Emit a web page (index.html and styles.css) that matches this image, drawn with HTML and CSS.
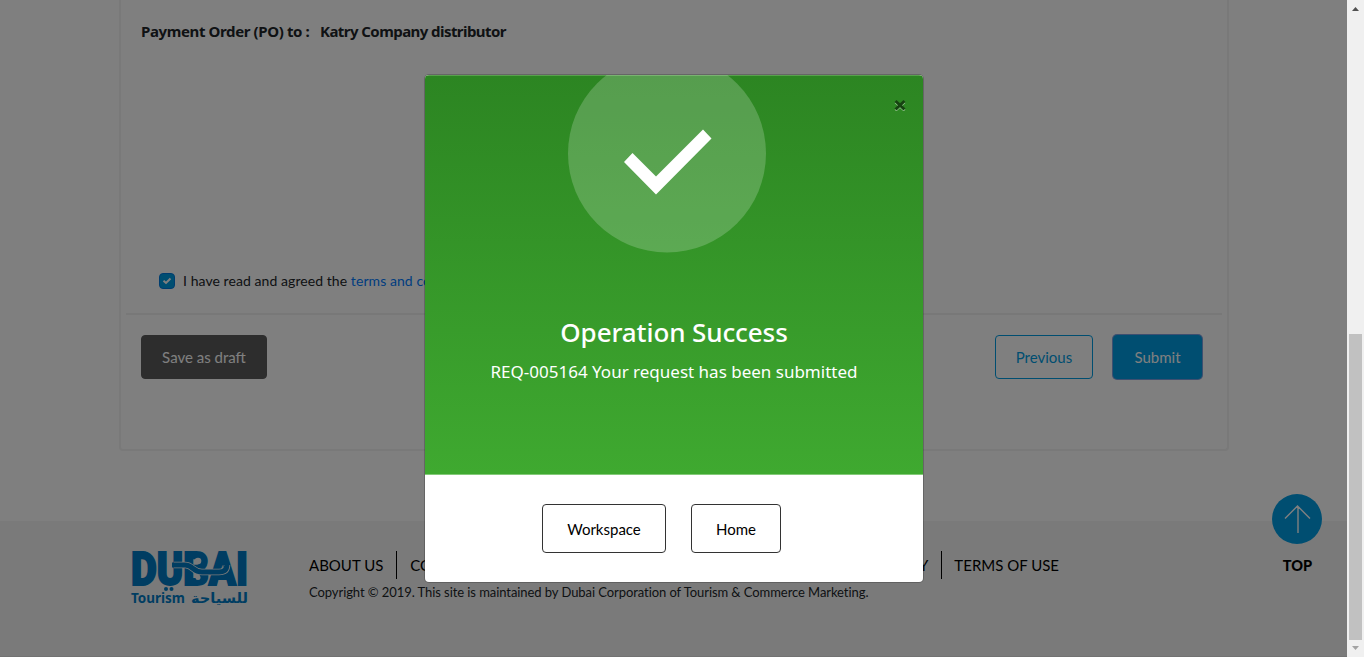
FILE: index.html
```html
<!DOCTYPE html>
<html lang="en">
<head>
<meta charset="utf-8">
<title>Operation Success</title>
<link rel="stylesheet" href="styles.css">
</head>
<body>
<div class="page">
  <main class="panel">
    <h2 class="po"><span class="po-label">Payment Order (PO) to :</span><span class="po-value">Katry Company distributor</span></h2>
    <div class="agree">
      <span class="checkbox"><svg width="10" height="8" viewBox="0 0 10 8"><path d="M1.500 3.800 4 6 8.500 1.500" fill="none" stroke="#fff" stroke-width="2"/></svg></span>
      <span class="agree-text">I have read and agreed the <a class="link">terms and conditions</a></span>
    </div>
    <div class="actions">
      <button class="btn btn-draft"><span>Save as draft</span></button>
      <button class="btn btn-prev"><span>Previous</span></button>
      <button class="btn btn-submit"><span>Submit</span></button>
    </div>
  </main>
  <footer class="footer">
    <svg class="logo" width="120" height="60" viewBox="0 0 120 60">
      <g fill="#007bc4">
        <text class="logo-main" x="1" y="34.500" textLength="117" lengthAdjust="spacingAndGlyphs">DUBAI</text>
        <circle cx="36" cy="39" r="2"/><circle cx="41.500" cy="39" r="2"/>
        <text class="logo-sub" x="1" y="53" textLength="54" lengthAdjust="spacingAndGlyphs">Tourism</text>
        <text class="logo-ar" x="118" y="53" direction="rtl" textLength="57" lengthAdjust="spacingAndGlyphs">للسياحة</text>
      </g>
      <path d="M44 15h11q4 0 8 3.500t9 3.500h17q8 0 8-7" fill="none" stroke="#f5f5f5" stroke-width="6.500"/>
      <path d="M42 15h13q4 0 8 3.500t9 3.500h17q8 0 8-8" fill="none" stroke="#007bc4" stroke-width="5"/>
      <circle cx="68" cy="11" r="3.300" fill="#f5f5f5"/><circle cx="68" cy="27.500" r="2.500" fill="#f5f5f5"/>
    </svg>
    <div class="footer-body">
      <nav class="nav"><a>ABOUT US</a><a class="sep">CONTACT US</a><a class="privacy">PRIVACY POLICY</a><a class="sep terms">TERMS OF USE</a></nav>
      <p class="copy">Copyright © 2019. This site is maintained by Dubai Corporation of Tourism &amp; Commerce Marketing.</p>
    </div>
  </footer>
</div>
<div class="top">
  <svg width="50" height="50" viewBox="0 0 50 50"><circle cx="25" cy="25" r="25" fill="#009de3"/><path d="M26 39V12M13 24.500 25.500 12 38 24.500" fill="none" stroke="#fff" stroke-width="1.400"/></svg>
  <span>TOP</span>
</div>
<div class="backdrop">
  <section class="modal">
    <div class="hero">
      <svg class="hero-mark" width="498" height="178" viewBox="425 75 498 178">
        <circle cx="667" cy="153.500" r="99" fill="#fff" fill-opacity=".2"/>
        <path d="M624 162 632.500 153 656 176.500 703 129.500 711.500 138.500 656 194.500Z" fill="#fff"/>
      </svg>
      <svg class="close" width="12" height="12" viewBox="0 0 12 12"><path d="m1.500 3 9 8.500M10.500 3l-9 8.500" stroke="#a5d39f" stroke-width="2.500"/><path d="m1.500 2 9 8.500M10.500 2l-9 8.500" stroke="#164311" stroke-width="3"/></svg>
      <h1 class="title"><span>Operation Success</span></h1>
      <p class="message"><span>REQ-005164 Your request has been submitted</span></p>
    </div>
    <div class="modal-actions">
      <button class="mbtn workspace"><span>Workspace</span></button>
      <button class="mbtn home"><span>Home</span></button>
    </div>
  </section>
</div>
<div class="scrollbar">
  <svg width="17" height="17" viewBox="0 0 17 17"><path d="m5 11 3.500-4L12 11Z" fill="#505050"/></svg>
  <div class="thumb"></div>
  <svg width="17" height="17" viewBox="0 0 17 17"><path d="m5 6 3.500 4L12 6Z" fill="#a3a3a3"/></svg>
</div>
</body>
</html>
```
FILE: styles.css
```css
* { box-sizing: border-box; }
html, body { margin: 0; height: 657px; overflow: hidden; }
body { position: relative; background: #fff; color: #212529; font-family: Lato, "Noto Sans", sans-serif; font-size: 15px; }
h1, h2, p { margin: 0; }
button { font: inherit; padding: 0; white-space: nowrap; }
span, a { white-space: nowrap; }

.page { width: 1347px; height: 657px; display: flex; flex-direction: column; }
.panel { width: 1110px; height: 451px; margin-left: 119px; border: 2px solid #f2f2f2; border-top: 0; border-radius: 0 0 4px 4px; display: flex; flex-direction: column; padding: 19px 5px 0; }
.po { height: 24px; padding-left: 15px; display: flex; align-items: center; font: bold 15px/24px "Noto Sans", sans-serif; }
.po-label { width: 179px; letter-spacing: -.38px; }
.po-value { letter-spacing: -.56px; }
.agree { margin-top: 225px; height: 24px; padding-left: 33px; display: flex; align-items: center; gap: 8px; }
.agree-text { font-size: 14px; letter-spacing: .07px; }
.checkbox { width: 16px; height: 16px; margin-top: 2px; border-radius: 4px; background: #009de3; border: 1px solid #007bdf; display: flex; align-items: center; justify-content: center; }
.link { color: #007bff; }
.actions { margin-top: 21px; border-top: 2px solid #f0f0f0; padding: 20px 20px 0 15px; display: flex; }
.btn { height: 44px; border-radius: 4px; border: 1px solid; font-size: 15px; }
.btn-draft { width: 126px; background: #5b5b5b; border-color: #5b5b5b; color: #fff; margin-right: auto; }
.btn-prev { width: 98px; margin-right: 20px; background: transparent; color: #009de3; border-color: #009de3; }
.btn-submit { width: 89px; background: #009de3; border-color: #009de3; color: #fff; box-shadow: 0 0 0 1px #7a9fe0; }

.footer { margin-top: 70px; flex: 1; background: #f5f5f5; display: flex; padding: 29px 0 0 130px; border-bottom: 1px solid #e4e4e4; }
.logo { overflow: visible; }
.logo-main { font: 900 46px Roboto, sans-serif; stroke: #007bc4; stroke-width: 2px; }
.logo-sub { font: bold 14px "Noto Sans", sans-serif; }
.logo-ar { font: bold 14px "DejaVu Sans", sans-serif; }
.footer-body { margin-left: 59px; width: 750px; }
.nav { display: flex; height: 28px; margin-top: 1px; line-height: 28px; color: #000; }
.nav .sep { border-left: 1px solid #000; margin-left: 12px; padding-left: 13px; }
.nav .sep:nth-child(2) { margin-left: 13px; }
.nav .privacy { margin-left: auto; letter-spacing: -.1px; margin-right: 1px; }
.nav .terms { padding-left: 12px; }
.copy { font-size: 13px; line-height: 27px; letter-spacing: -.07px; white-space: nowrap; }

.top { position: absolute; left: 1272px; top: 494px; width: 50px; display: flex; flex-direction: column; align-items: center; color: #000; font-weight: 900; font-size: 14.500px; gap: 13px; }
.top span { line-height: 18px; margin-left: 1px; }

.backdrop { position: absolute; inset: 0 17px 0 0; background: rgba(0, 0, 0, .5); display: flex; justify-content: center; align-items: flex-start; }
.modal { margin: 75px 0 0 1px; width: 498px; height: 507px; border-radius: 4px; overflow: hidden; background: #fff; box-shadow: 0 0 0 1px rgba(0, 0, 0, .2); }
.hero { position: relative; height: 400px; color: #fff; background: linear-gradient(#2c8522, #3fa930); border-top: 1px solid #58a14e; border-bottom: 1px solid #83ca78; text-align: center; display: flex; flex-direction: column; align-items: center; }
.hero-mark { display: block; margin-top: -1px; flex: none; }
.close { position: absolute; right: 17px; top: 23px; }
.title { margin-top: 62px; font-size: 26px; line-height: 34px; font-weight: 500; font-family: "Noto Sans", sans-serif; letter-spacing: -.1px; }
.message { margin-top: 11px; font-size: 17px; line-height: 24px; font-family: "Noto Sans", sans-serif; }
.modal-actions { display: flex; padding: 29px 0 0 117px; gap: 25px; }
.mbtn { height: 49px; border: 1px solid #333; border-radius: 4px; background: #fff; color: #000; font-size: 15px; }
.workspace { width: 124px; }
.home { width: 90px; }

.scrollbar { position: absolute; right: 0; top: 0; width: 17px; height: 657px; background: #f0f0f0; display: flex; flex-direction: column; align-items: center; }
.thumb { width: 13px; height: 306px; margin-top: 317px; background: #c1c1c1; }
```
